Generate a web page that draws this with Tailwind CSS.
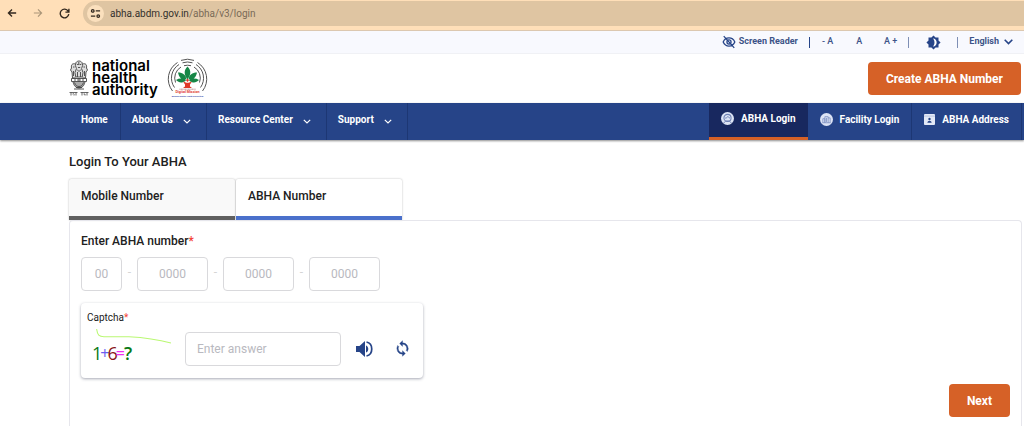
<!DOCTYPE html>
<html lang="en">
<head>
  <meta charset="UTF-8" />
  <meta name="viewport" content="width=device-width, initial-scale=1.0" />
  <title>Login To Your ABHA</title>
  <script src="https://cdn.jsdelivr.net/npm/@tailwindcss/browser@4"></script>
</head>
<body class="min-h-screen flex flex-col bg-white font-['Roboto',sans-serif] text-[#212121] overflow-x-hidden">

  <!-- Browser bar -->
  <div class="flex items-center h-[31px] pb-1 bg-[#ffdfb8] border-b border-[#dcc8b0] shrink-0">
    <div class="flex items-center gap-4 pl-[7px] w-[83px] shrink-0">
      <button aria-label="Back" class="text-[#33291f]"><svg class="size-[10px]" viewBox="0 0 12 12" fill="none" stroke="currentColor" stroke-width="1.6"><path d="M11 6H2M6 1.7 1.7 6 6 10.3" /></svg></button>
      <button aria-label="Forward" class="text-[#ab9679]"><svg class="size-[10px]" viewBox="0 0 12 12" fill="none" stroke="currentColor" stroke-width="1.4"><path d="M1 6h9M6 1.7 10.3 6 6 10.3" /></svg></button>
      <button aria-label="Reload" class="text-[#33291f]"><svg class="size-[11px]" viewBox="0 0 12 12" fill="none" stroke="currentColor" stroke-width="1.5"><path d="M10 3.4A4.7 4.7 0 1 0 10.7 6.8M10.8 .8v3.7H7" /></svg></button>
    </div>
    <div class="flex grow items-center gap-[6px] h-[25px] mt-px pl-1 rounded-l-full bg-[#dfc5a2]">
      <span class="flex items-center justify-center size-[17px] rounded-full bg-[#fbe0bd] text-[#33291f]">
        <svg class="size-[11px]" viewBox="0 0 12 12" fill="none" stroke="currentColor" stroke-width="1.4"><circle cx="3" cy="3.2" r="1.4" /><path d="M6.3 3.2H11M1 8.8h4.7" /><circle cx="9" cy="8.8" r="1.4" /></svg>
      </span>
      <span class="text-[10px] text-[#33302c]">abha.abdm.gov.in<span class="text-[#7a6a56]">/abha/v3/login</span></span>
    </div>
  </div>

  <!-- Accessibility bar -->
  <div class="flex items-center justify-end h-[23px] pr-[11px] bg-[#f8f9fe] border-b border-[#f0f1f5] text-[9px] font-medium text-[#3d5488] shrink-0">
    <button class="flex items-center gap-[3px] font-bold">
      <svg class="size-[14px] text-[#264488]" viewBox="0 0 24 24" fill="none" stroke="currentColor" stroke-width="2.2"><path d="M2 12c2-4.500 6-7 10-7s8 2.500 10 7c-2 4.500-6 7-10 7S4 16.500 2 12zM3 2l18 20" /><circle cx="12" cy="12" r="3.500" /></svg>
      Screen Reader
    </button>
    <span class="ml-[11px] w-px h-[11px] bg-[#264488]"></span>
    <button class="ml-3">- A</button>
    <button class="ml-[23px]">A</button>
    <button class="ml-[22px]">A +</button>
    <span class="ml-[11px] w-px h-[11px] bg-[#7e8fb5]"></span>
    <button aria-label="Contrast" class="ml-[17px] text-[#264488]"><svg class="size-[15px]" viewBox="0 0 24 24" fill="currentColor"><path d="M20 8.700V4h-4.700L12 .7 8.700 4H4v4.700L.7 12 4 15.300V20h4.700l3.300 3.300 3.300-3.300H20v-4.700l3.300-3.300z" /><path d="M11 5.500c8 0 8 13 0 13 3.500-3 3.500-10 0-13z" fill="#fff" /></svg></button>
    <span class="ml-4 w-px h-[11px] bg-[#7e8fb5]"></span>
    <button class="ml-[11px] flex items-center gap-[5px] font-bold">English
      <svg class="w-[9px] h-[6px]" viewBox="0 0 9 6" fill="none" stroke="#264488" stroke-width="1.6"><path d="M.7.8 4.500 4.600 8.300.8" /></svg>
    </button>
  </div>

  <!-- Logos -->
  <header class="flex items-center justify-between h-[49px] pl-[69px] pr-[3px] shrink-0">
    <div class="flex items-center gap-[9px]">
      <a href="#" class="flex items-center gap-[3px] text-black">
        <svg class="w-[20px] h-[37px]" viewBox="0 0 20 37" fill="none" stroke="#444" stroke-width=".9">
          <path d="M7 2.500c1.500-2 4.500-2 6 0l.6 3-1 3 1.400 4-.8 4.500H6.800L6 12.500l1.400-4-1-3zM6.500 4C3 3 2 5 2.500 8l-1 2L3 12l.5 6h3.300M13.500 4c3.500-1 4.500 1 4 4l1 2L17 12l-.5 6h-3.300" fill="#ddd" />
          <path d="M8 4.500h1.500M10.700 4.500h1.500M9 7.500h2.200M8 9.500l2 2 2-2M8.500 12v5M11.500 12v5M4 7h1.500M14.500 7H16M4.500 11v5M15.500 11v5M9.800 2v3" />
          <path d="M2.500 18.500h15v3h-15zM5 20h2M13 20h2" /><circle cx="10" cy="20" r="1.200" />
          <path d="M4 22c1 4 3 6 6 6s5-2 6-6M5.500 22.500c1 3 2.500 4 4.500 4s3.500-1 4.500-4M5 29h10M7 27.500h6" fill="#aaa" />
          <path d="M.5 32.500h8M11.500 32.500h8M2 32.500v3M3.500 34c1-1 2 0 1.500 1.500M7 32.500v3M13 32.500v3M14.500 34h1.500v1.500M18 32.500v3" stroke-width=".8" />
        </svg>
        <span class="flex flex-col pb-[2px] font-['Inter',sans-serif] text-[15px] leading-[12px] font-semibold"><span>national</span><span>health</span><span>authority</span></span>
      </a>
      <a href="#" aria-label="Ayushman Bharat Digital Mission">
        <svg class="size-[41px]" viewBox="0 0 41 41" fill="none">
          <g stroke="#555" stroke-width="1">
            <path d="M5.500 33A19.300 19.300 0 0 1 10.500 4.500M14 2.400a19 19 0 0 1 13 0M30.500 4.500A19.300 19.300 0 0 1 35.500 33" />
            <path d="M7.500 29.500A16 16 0 0 1 12 6.500M15.500 4.800a16 16 0 0 1 10 0M29 6.500A16 16 0 0 1 33.500 29.500" />
            <path d="M8.500 24.500A12.800 12.800 0 0 1 14 9M17 7.700a13 13 0 0 1 7 0M27 9a12.800 12.800 0 0 1 5.500 15.500" />
          </g>
          <path d="M20.500 8.500c4 4 3.500 8 0 13-3.500-5-4-9 0-13zM19.500 21.500c-5 .5-7.500-2-8.500-7 5 0 7.500 2 8.500 7zM21.500 21.500c5 .5 7.500-2 8.500-7-5 0-7.500 2-8.500 7zM19 22.500c-4 3-7 2.500-10-.5 3.500-2 7-2 10 .5zM22 22.500c4 3 7 2.500 10-.5-3.500-2-7-2-10 .5z" fill="#168646" />
          <path d="M20.500 20.500l1.500 1.700-1.500 1.800-1.500-1.800zM16 23.500l3.500 1.200h2l3.500-1.200-2 3v2l2 1.500h-9l2-1.500v-2z" fill="#df3828" />
          <path d="M12.500 31.200h16" stroke="#a66" stroke-width=".8" stroke-dasharray="1 .4" />
          <text x="20.500" y="34.800" text-anchor="middle" font-family="Roboto" font-size="3.600" font-weight="700" fill="#e23b30">Digital Mission</text>
          <text x="20.500" y="39" text-anchor="middle" font-family="Roboto" font-size="2.100" font-weight="700" fill="#3248ad">Building Digital Health Ecosystem</text>
        </svg>
      </a>
    </div>
    <button class="h-[33px] px-[18px] rounded bg-[#d66127] text-[12px] font-bold text-white">Create ABHA Number</button>
  </header>

  <!-- Main menu -->
  <nav class="flex justify-between h-[37px] pl-[69px] pr-[2px] bg-[#264488] text-[10px] font-bold text-white shadow-[0_1px_2px_rgba(0,0,0,0.45)] shrink-0">
    <div class="flex">
      <a href="#" class="flex items-center px-3 pb-1 border-r border-[#1d3774]">Home</a>
      <a href="#" class="flex items-center gap-[10px] pl-[11px] pr-[15px] pb-1 border-r border-[#1d3774]">About Us
        <svg class="w-[8px] h-[5px] mt-1" viewBox="0 0 8 5" fill="none" stroke="currentColor" stroke-width="1.200"><path d="M.8.8 4 4 7.200.8" /></svg></a>
      <a href="#" class="flex items-center gap-[10px] pl-[11px] pr-[15px] pb-1 border-r border-[#1d3774]">Resource Center
        <svg class="w-[8px] h-[5px] mt-1" viewBox="0 0 8 5" fill="none" stroke="currentColor" stroke-width="1.200"><path d="M.8.8 4 4 7.200.8" /></svg></a>
      <a href="#" class="flex items-center gap-[10px] pl-[11px] pr-[15px] pb-1 border-r border-[#1d3774]">Support
        <svg class="w-[8px] h-[5px] mt-1" viewBox="0 0 8 5" fill="none" stroke="currentColor" stroke-width="1.200"><path d="M.8.8 4 4 7.200.8" /></svg></a>
    </div>
    <div class="flex">
      <a href="#" class="flex items-center gap-[7px] px-3 pb-[3px] bg-[#18285f] border-b-3 border-[#d66127]">
        <svg class="size-[13px]" viewBox="0 0 16 16" fill="none"><circle cx="8" cy="8" r="8" fill="#dde4f5" /><circle cx="8" cy="7.300" r="4.400" stroke="#6d80b4" stroke-width="1.300" /><path d="M5 7.500c2 0 3-1 3.500-2 .5 1 1.500 1.700 2.500 2M3.500 13.500c1-2 2.500-2.500 4.500-2.500s3.500.5 4.500 2.500" stroke="#6d80b4" stroke-width="1.200" /></svg>
        ABHA Login</a>
      <a href="#" class="flex items-center gap-[7px] px-3 pb-1 border-r border-[#1d3774]">
        <svg class="size-[13px]" viewBox="0 0 16 16" fill="none"><circle cx="8" cy="8" r="8" fill="#dde4f5" /><path d="M3.500 12V7H6v5M6 12V4.500h4V12M10 6h2.500v6M3 12h10M8 6v5" stroke="#7d90c2" stroke-width="1" /></svg>
        Facility Login</a>
      <a href="#" class="flex items-center gap-[7px] px-3 pb-1 border-r border-[#1d3774]">
        <svg class="size-[11px]" viewBox="0 0 12 12"><rect width="12" height="12" rx="1" fill="#e3e9f7" /><path d="M0 2.300h12" stroke="#a6b4d7" stroke-width=".7" /><circle cx="6" cy="5.500" r="1.300" fill="#264488" /><path d="M3.700 9.600c0-3 4.600-3 4.600 0z" fill="#264488" /></svg>
        ABHA Address</a>
    </div>
  </nav>

  <!-- Login -->
  <main class="flex grow flex-col pt-3 pl-[69px] pr-[2px]">
    <h1 class="mb-[7px] text-[13px] leading-5 font-medium">Login To Your ABHA</h1>
    <div class="flex gap-px text-[12px] font-medium" role="tablist">
      <button role="tab" aria-selected="false" class="w-[166px] h-[41px] px-3 pb-1 text-left bg-[#f9f9f9] border-b-4 border-[#606060] rounded-t-xs shadow-[0_0_2px_rgba(0,0,0,0.3)]">Mobile Number</button>
      <button role="tab" aria-selected="true" class="w-[166px] h-[41px] px-3 pb-1 text-left bg-white border-b-4 border-[#4a70cb] rounded-t-xs shadow-[0_0_2px_rgba(0,0,0,0.3)]">ABHA Number</button>
    </div>
    <form class="flex grow flex-col items-start px-[11px] pt-[11px] pb-[9px] border-x border-t border-[#e6e6ec] rounded-t-sm">
      <label for="abha-1" class="text-[12px] leading-[18px] font-medium">Enter ABHA number<span class="text-[#f44336]">*</span></label>
      <div class="flex items-center mt-[7px] text-[12px] text-[#d5d5d5]">
        <input id="abha-1" placeholder="00" aria-label="First 2 digits" class="w-[41px] h-[34px] rounded border border-[#d9d9dc] text-center text-[#212121] placeholder:text-[#b9b9c0]" />
        <span class="w-[15px] pb-1 text-center">-</span>
        <input placeholder="0000" aria-label="Digits 3 to 6" class="w-[71px] h-[34px] rounded border border-[#d9d9dc] text-center text-[#212121] placeholder:text-[#b9b9c0]" />
        <span class="w-[15px] pb-1 text-center">-</span>
        <input placeholder="0000" aria-label="Digits 7 to 10" class="w-[71px] h-[34px] rounded border border-[#d9d9dc] text-center text-[#212121] placeholder:text-[#b9b9c0]" />
        <span class="w-[15px] pb-1 text-center">-</span>
        <input placeholder="0000" aria-label="Digits 11 to 14" class="w-[71px] h-[34px] rounded border border-[#d9d9dc] text-center text-[#212121] placeholder:text-[#b9b9c0]" />
      </div>
      <div class="mt-3 w-[342px] h-[75px] pl-[6px] pt-2 rounded shadow-[0_1px_3px_rgba(60,64,90,0.45)]">
        <label for="captcha" class="block text-[10px] leading-[14px]">Captcha<span class="text-[#f44336]">*</span></label>
        <div class="flex items-center">
          <div class="relative w-[98px] h-[47px] pt-[16px] pl-[5px]">
            <svg class="absolute left-[9px] top-[3px] w-[76px] h-[16px]" viewBox="0 0 76 16" fill="none" stroke="#baf873" stroke-width="1.100"><path d="M.6 1C1.500 7 3 8.700 8 8.700h25C48 9.500 60 11 75 15" /></svg>
            <div class="flex items-center font-['Open_Sans',sans-serif] text-[18px] leading-[24px]">
              <span class="text-[#0a7a14] -mr-[2px]">1</span><span class="text-[#6a5df0] text-[16px] -mr-[2px]">+</span><span class="text-[#8a1420] -mr-[2px]">6</span><span class="text-[#f22df2] text-[16px] -mr-px">=</span><span class="text-[#0a7a14] font-semibold">?</span>
            </div>
          </div>
          <input id="captcha" placeholder="Enter answer" class="w-[156px] h-[34px] px-[11px] rounded border border-[#d9d9dc] text-[12px] placeholder:text-[#b9b9c0]" />
          <button type="button" aria-label="Play captcha" class="ml-[14px] text-[#264488]"><svg class="size-[18px]" viewBox="0 0 18 18" fill="currentColor"><path d="M1 6h3.500L10 1v16l-5.500-5H1zM11 5.500c3 1 3 6 0 7z" /><path d="M11.500 2c7 1.500 7 12.500 0 14" fill="none" stroke="currentColor" stroke-width="1.700" /></svg></button>
          <button type="button" aria-label="Refresh captcha" class="ml-[21px] text-[#264488]"><svg class="size-[17px]" viewBox="0 0 24 24" fill="currentColor" stroke="currentColor" stroke-width=".5"><path d="M12 4V1L8 5l4 4V6c3.300 0 6 2.700 6 6 0 1-.3 2-.7 2.800l1.500 1.500A8 8 0 0 0 12 4zm0 14c-3.300 0-6-2.700-6-6 0-1 .3-2 .7-2.800L5.200 7.700A8 8 0 0 0 12 20v3l4-4-4-4z" /></svg></button>
        </div>
      </div>
      <button class="mt-auto self-end h-[33px] px-[18px] rounded bg-[#d66127] text-[12px] font-bold text-white">Next</button>
    </form>
  </main>

</body>
</html>
